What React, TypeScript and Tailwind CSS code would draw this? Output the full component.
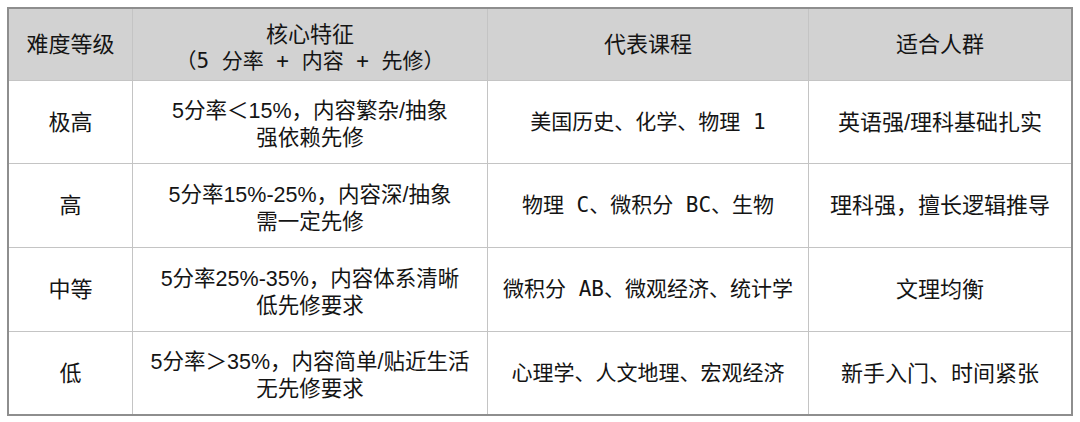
const sans = "font-['Liberation_Sans','Noto_Sans_CJK_SC',sans-serif]";
const mono = "font-['DejaVu_Sans_Mono','Noto_Sans_CJK_SC',monospace]";

type Row = { level: string; feature: [string, string]; courses: string; fit: string };

const rows: Row[] = [
  { level: '极高', feature: ['5分率＜15%，内容繁杂/抽象', '强依赖先修'], courses: '美国历史、化学、物理 1', fit: '英语强/理科基础扎实' },
  { level: '高', feature: ['5分率15%-25%，内容深/抽象', '需一定先修'], courses: '物理 C、微积分 BC、生物', fit: '理科强，擅长逻辑推导' },
  { level: '中等', feature: ['5分率25%-35%，内容体系清晰', '低先修要求'], courses: '微积分 AB、微观经济、统计学', fit: '文理均衡' },
  { level: '低', feature: ['5分率＞35%，内容简单/贴近生活', '无先修要求'], courses: '心理学、人文地理、宏观经济', fit: '新手入门、时间紧张' },
];

function Cell({ children, last, bottom, head, two, font = sans, size = 'text-[22px]' }: { children: React.ReactNode; last?: boolean; bottom?: boolean; head?: boolean; two?: boolean; font?: string; size?: string }) {
  return (
    <div
      className={`flex flex-col items-center justify-center text-center ${font} ${size} leading-[27px] text-[#141414] border-[#c4c4c4] ${two ? 'pt-[6px]' : ''} ${last ? '' : 'border-r'} ${bottom ? '' : 'border-b'} ${head ? 'bg-[#d2d2d2]' : 'bg-white'}`}
    >
      {children}
    </div>
  );
}

export default function App() {
  return (
    <div className="w-[1080px] h-[422px] bg-white p-[7px]">
      <div className="w-[1066px] h-[409px] border-2 border-[#8e8e8e] grid grid-cols-[124px_355px_321px_262px] grid-rows-[72px_83px_84px_84px_82px]">
        <Cell head>难度等级</Cell>
        <Cell head two size="text-[21px]">
          <span className="text-[22px]">核心特征</span>
          <span className={mono}>（5 分率 + 内容 + 先修）</span>
        </Cell>
        <Cell head>代表课程</Cell>
        <Cell head last>适合人群</Cell>
        {rows.map((r, i) => {
          const bottom = i === rows.length - 1;
          return (
            <div key={r.level} className="contents">
              <Cell bottom={bottom}>{r.level}</Cell>
              <Cell bottom={bottom} two size="text-[21.5px]">
                <span>{r.feature[0]}</span>
                <span>{r.feature[1]}</span>
              </Cell>
              <Cell bottom={bottom} font={mono} size="text-[21px]">{r.courses}</Cell>
              <Cell bottom={bottom} last>{r.fit}</Cell>
            </div>
          );
        })}
      </div>
    </div>
  );
}
